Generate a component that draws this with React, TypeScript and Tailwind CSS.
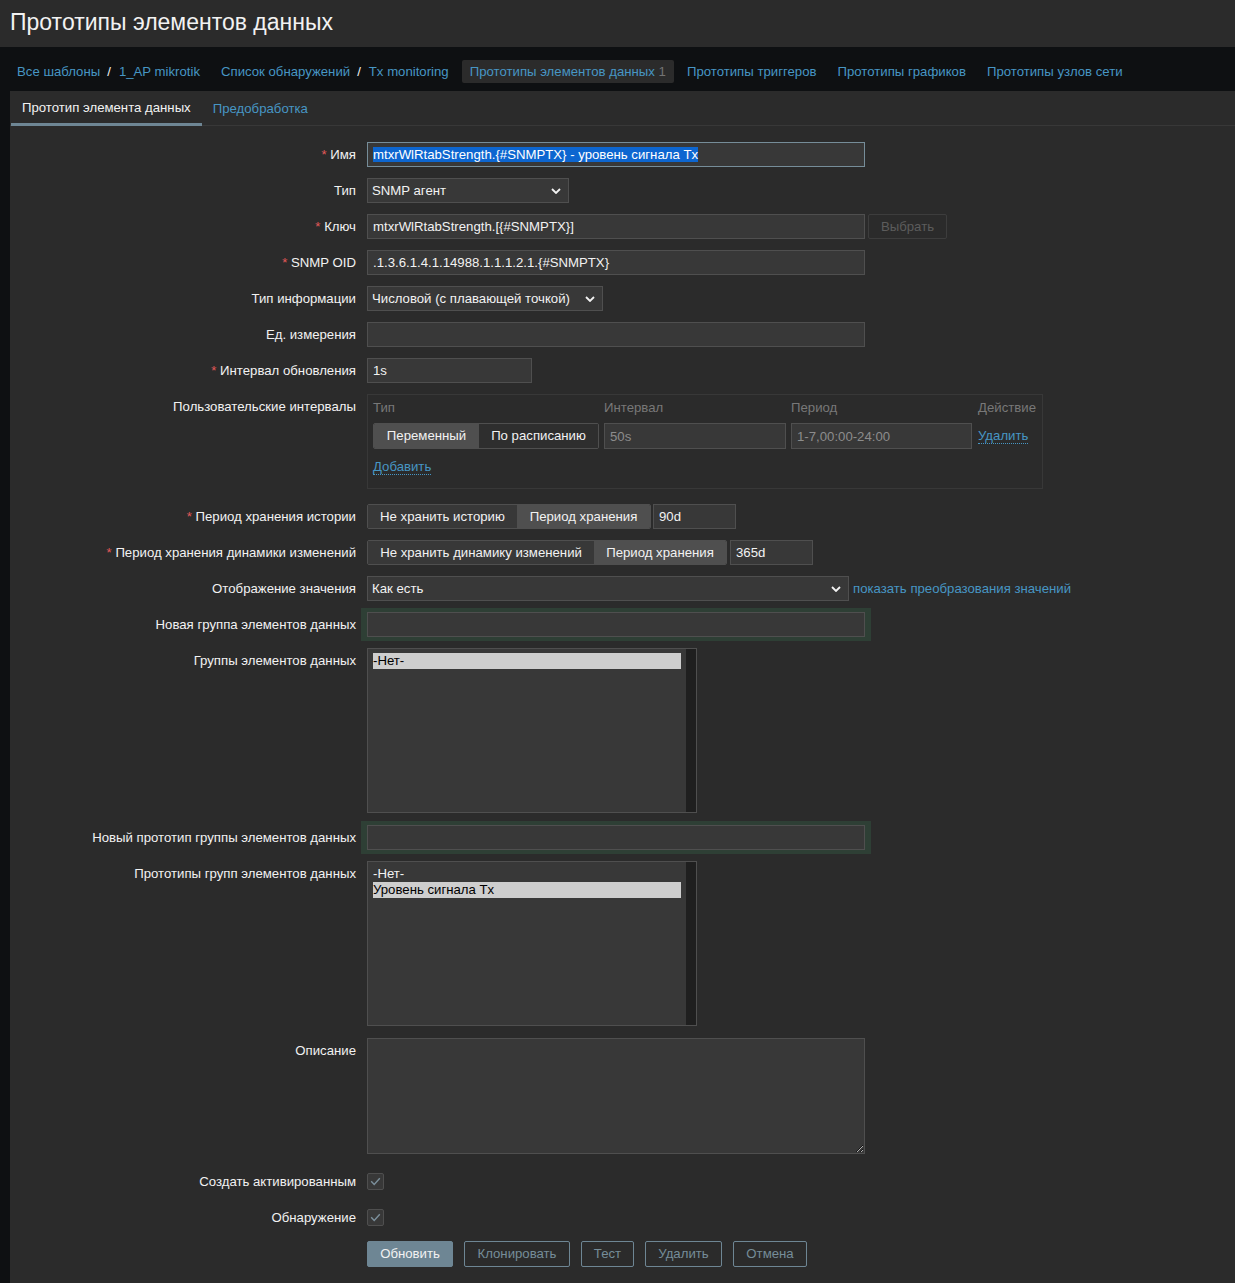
import React from 'react';

type RowProps = {
  label?: string;
  req?: boolean;
  className?: string;
  children?: React.ReactNode;
};

const Row: React.FC<RowProps> = ({ label, req, className = '', children }) => (
  <div className={`grid grid-cols-[346px_1fr] gap-x-[11px] ${className}`}>
    <div className="text-right leading-[25px] whitespace-nowrap">
      {req && <span className="text-[#e45959]">* </span>}
      {label}
    </div>
    <div className="flex items-start min-w-0">{children}</div>
  </div>
);

const Chevron = () => (
  <svg width="10" height="6" viewBox="0 0 10 6" className="shrink-0">
    <path d="M1 1l4 4 4-4" fill="none" stroke="#f2f2f2" strokeWidth="1.8" />
  </svg>
);

const TextInput: React.FC<{ value?: string; placeholder?: string; className?: string }> = ({
  value = '',
  placeholder,
  className = '',
}) => (
  <input
    readOnly
    value={value}
    placeholder={placeholder}
    className={`h-[25px] bg-[#383838] border border-[#4f4f4f] px-[5px] text-[#f2f2f2] placeholder:text-[#8c8c8c] outline-none ${className}`}
  />
);

const Select: React.FC<{ value: string; className?: string }> = ({ value, className = '' }) => (
  <div
    className={`h-[25px] bg-[#383838] border border-[#4f4f4f] pl-[4px] pr-[7px] flex items-center justify-between ${className}`}
  >
    <span className="whitespace-nowrap">{value}</span>
    <Chevron />
  </div>
);

type Seg = { text: string; w: string; on?: boolean; dim?: boolean };

const Segmented: React.FC<{ items: Seg[]; h?: string }> = ({ items, h = 'h-[25px]' }) => (
  <div className={`flex border border-[#4f4f4f] rounded-[2px] overflow-hidden ${h}`}>
    {items.map((s) => (
      <div
        key={s.text}
        className={`${s.w} flex items-center justify-center whitespace-nowrap ${
          s.on ? 'bg-[#4f4f4f]' : s.dim ? 'bg-[#2e2e2e]' : 'bg-[#383838]'
        }`}
      >
        {s.text}
      </div>
    ))}
  </div>
);

const Checkbox = () => (
  <div className="mt-[4px] w-[17px] h-[17px] bg-[#383838] border border-[#4f4f4f] rounded-[2px] flex items-center justify-center">
    <svg width="11" height="9" viewBox="0 0 11 9">
      <path d="M1.2 4.2l3 3.2L9.8 1.2" fill="none" stroke="#7c909c" strokeWidth="1.4" />
    </svg>
  </div>
);

const ListBox: React.FC<{ options: { text: string; sel?: boolean }[] }> = ({ options }) => (
  <div className="w-[330px] h-[165px] border border-[#4f4f4f] bg-[#383838] flex">
    <div className="flex-1 pt-[4px] px-[5px]">
      {options.map((o) => (
        <div
          key={o.text}
          className={`h-[16px] leading-[16px] whitespace-nowrap ${o.sel ? 'bg-[#cecece] text-black' : 'text-[#f2f2f2]'}`}
        >
          {o.text}
        </div>
      ))}
    </div>
    <div className="w-[10px] bg-[#1f1f1f]" />
  </div>
);

const glow = 'shadow-[0_0_0_4px_#2e3f35,-2px_0_0_4px_#2e3f35,2px_0_0_4px_#2e3f35]';

export default function App() {
  return (
    <div className="min-h-screen flex flex-col bg-[#0e1012] text-[#f2f2f2] text-[13.2px] font-['Liberation_Sans',Arial,sans-serif]">
      {/* Title */}
      <header className="h-[47px] bg-[#2b2b2b] px-[10px] flex items-center pb-[2px]">
        <h1 className="text-[23px] text-[#f2f2f2]">Прототипы элементов данных</h1>
      </header>

      {/* Navigation */}
      <nav className="h-[44px] pl-[9px] pt-[13px] flex items-start gap-[5px] text-[#4796c4]">
        <div className="h-[23px] leading-[23px] px-[8px] whitespace-nowrap">
          Все шаблоны<span className="text-[#f2f2f2] ml-[7px] mr-[8px]">/</span>1_AP mikrotik
        </div>
        <div className="h-[23px] leading-[23px] px-[8px] whitespace-nowrap">
          Список обнаружений<span className="text-[#f2f2f2] ml-[7px] mr-[8px]">/</span>Tx monitoring
        </div>
        <div className="h-[23px] leading-[23px] px-[8px] whitespace-nowrap bg-[#2b2b2b] rounded-[2px]">
          Прототипы элементов данных <span className="text-[#737373]">1</span>
        </div>
        <div className="h-[23px] leading-[23px] px-[8px] whitespace-nowrap">Прототипы триггеров</div>
        <div className="h-[23px] leading-[23px] px-[8px] whitespace-nowrap">Прототипы графиков</div>
        <div className="h-[23px] leading-[23px] px-[8px] whitespace-nowrap">Прототипы узлов сети</div>
      </nav>

      {/* Panel */}
      <main className="flex-1 ml-[10px] bg-[#2b2b2b]">
        <div className="h-[35px] flex border-b border-[#383838] pl-[1px]">
          <div className="h-[35px] -mb-[1px] px-[11px] flex items-center border-b-[3px] border-[#6e8694] text-[#f2f2f2] pt-[2px]">
            Прототип элемента данных
          </div>
          <div className="h-[34px] px-[11px] flex items-center text-[#4796c4] pt-[1px]">Предобработка</div>
        </div>

        <form className="pt-[16px] pb-[16px] flex flex-col">
          <Row label="Имя" req>
            <div className="w-[498px] h-[25px] bg-[#383838] border border-[#768d99] px-[5px] flex items-center">
              <span className="bg-[#0d66d0] text-white leading-[15px] whitespace-nowrap">
                mtxrWlRtabStrength.{'{#SNMPTX}'} - уровень сигнала Tx
              </span>
            </div>
          </Row>

          <Row label="Тип" className="mt-[11px]">
            <Select value="SNMP агент" className="w-[202px]" />
          </Row>

          <Row label="Ключ" req className="mt-[11px]">
            <TextInput value="mtxrWlRtabStrength.[{#SNMPTX}]" className="w-[498px]" />
            <div className="ml-[3px] w-[79px] h-[25px] border border-[#3d3d3d] rounded-[2px] flex items-center justify-center text-[#5c5c5c]">
              Выбрать
            </div>
          </Row>

          <Row label="SNMP OID" req className="mt-[11px]">
            <TextInput value=".1.3.6.1.4.1.14988.1.1.1.2.1.{#SNMPTX}" className="w-[498px]" />
          </Row>

          <Row label="Тип информации" className="mt-[11px]">
            <Select value="Числовой (с плавающей точкой)" className="w-[236px]" />
          </Row>

          <Row label="Ед. измерения" className="mt-[11px]">
            <TextInput className="w-[498px]" />
          </Row>

          <Row label="Интервал обновления" req className="mt-[11px]">
            <TextInput value="1s" className="w-[165px]" />
          </Row>

          <Row label="Пользовательские интервалы" className="mt-[11px]">
            <div className="w-[676px] h-[95px] border border-[#383838] px-[5px] pt-[4px]">
              <div className="grid grid-cols-[226px_182px_181px_auto] gap-x-[5px] leading-[18px] text-[#787878]">
                <div>Тип</div>
                <div>Интервал</div>
                <div>Период</div>
                <div className="pl-[1px]">Действие</div>
              </div>
              <div className="mt-[6px] grid grid-cols-[226px_182px_181px_auto] gap-x-[5px] items-center">
                <Segmented
                  h="h-[26px]"
                  items={[
                    { text: 'Переменный', w: 'w-[105px]', on: true },
                    { text: 'По расписанию', w: 'w-[119px]', dim: true },
                  ]}
                />
                <TextInput placeholder="50s" className="w-[182px] h-[26px]" />
                <TextInput placeholder="1-7,00:00-24:00" className="w-[181px] h-[26px]" />
                <div className="pl-[1px]">
                  <span className="text-[#4796c4] border-b border-dotted border-[#4796c4]">Удалить</span>
                </div>
              </div>
              <div className="mt-[9px] leading-[18px]">
                <span className="text-[#4796c4] border-b border-dotted border-[#4796c4]">Добавить</span>
              </div>
            </div>
          </Row>

          <Row label="Период хранения истории" req className="mt-[15px]">
            <Segmented
              items={[
                { text: 'Не хранить историю', w: 'w-[149px]' },
                { text: 'Период хранения', w: 'w-[133px]', on: true },
              ]}
            />
            <TextInput value="90d" className="ml-[2px] w-[83px]" />
          </Row>

          <Row label="Период хранения динамики изменений" req className="mt-[11px]">
            <Segmented
              items={[
                { text: 'Не хранить динамику изменений', w: 'w-[226px]' },
                { text: 'Период хранения', w: 'w-[132px]', on: true },
              ]}
            />
            <TextInput value="365d" className="ml-[3px] w-[83px]" />
          </Row>

          <Row label="Отображение значения" className="mt-[11px]">
            <Select value="Как есть" className="w-[482px]" />
            <span className="ml-[4px] leading-[25px] text-[#4796c4] whitespace-nowrap">
              показать преобразования значений
            </span>
          </Row>

          <Row label="Новая группа элементов данных" className="mt-[11px]">
            <TextInput className={`w-[498px] ${glow}`} />
          </Row>

          <Row label="Группы элементов данных" className="mt-[11px]">
            <ListBox options={[{ text: '-Нет-', sel: true }]} />
          </Row>

          <Row label="Новый прототип группы элементов данных" className="mt-[12px]">
            <TextInput className={`w-[498px] ${glow}`} />
          </Row>

          <Row label="Прототипы групп элементов данных" className="mt-[11px]">
            <ListBox options={[{ text: '-Нет-' }, { text: 'Уровень сигнала Tx', sel: true }]} />
          </Row>

          <Row label="Описание" className="mt-[12px]">
            <textarea
              readOnly
              className="w-[498px] h-[116px] bg-[#383838] border border-[#4f4f4f] outline-none block"
            />
          </Row>

          <Row label="Создать активированным" className="mt-[15px]">
            <Checkbox />
          </Row>

          <Row label="Обнаружение" className="mt-[11px]">
            <Checkbox />
          </Row>

          <Row className="mt-[11px]">
            <div className="flex gap-[11px]">
              <button type="button" className="w-[86px] h-[26px] rounded-[2px] bg-[#6e8694] border border-[#6e8694] text-[#f2f2f2]">
                Обновить
              </button>
              <button type="button" className="w-[106px] h-[26px] rounded-[2px] border border-[#6e8694] text-[#768d99]">
                Клонировать
              </button>
              <button type="button" className="w-[53px] h-[26px] rounded-[2px] border border-[#6e8694] text-[#768d99]">
                Тест
              </button>
              <button type="button" className="w-[77px] h-[26px] rounded-[2px] border border-[#6e8694] text-[#768d99]">
                Удалить
              </button>
              <button type="button" className="w-[74px] h-[26px] rounded-[2px] border border-[#6e8694] text-[#768d99]">
                Отмена
              </button>
            </div>
          </Row>
        </form>
      </main>
    </div>
  );
}
